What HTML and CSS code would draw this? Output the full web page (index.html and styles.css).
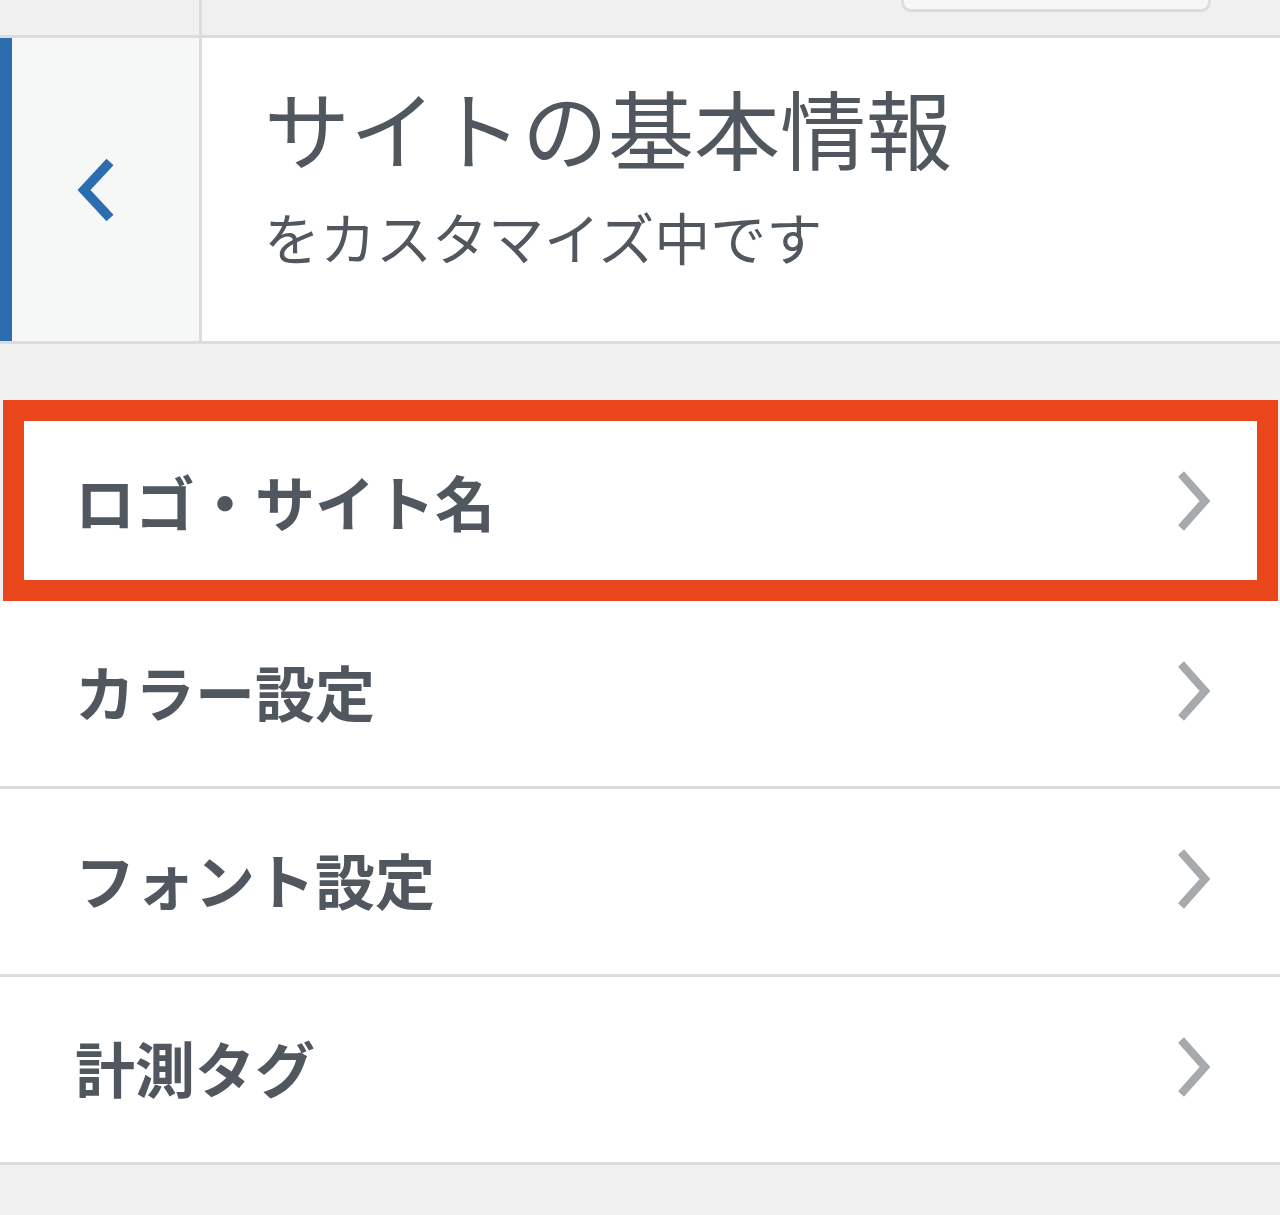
FILE: index.html
```html
<!DOCTYPE html>
<html lang="ja">
<head>
    <meta charset="UTF-8">
    <meta name="viewport" content="width=device-width, initial-scale=1.0">
    <title>サイトの基本情報</title>
    <link rel="stylesheet" href="styles.css">
</head>
<body>
    <div class="topbar">
        <div class="topbar-side"></div>
        <div class="topbar-main">
            <span class="topbar-button"></span>
        </div>
    </div>

    <div class="panel-header">
        <button class="back" aria-label="戻る">
            <svg width="36" height="62" viewBox="0 0 36 62">
                <polyline points="33,3 7,31 33,59" fill="none" stroke="#2c6db0" stroke-width="9.5"/>
            </svg>
        </button>
        <div class="panel-title">
            <h2>サイトの基本情報</h2>
            <p>をカスタマイズ中です</p>
        </div>
    </div>

    <ul class="sections">
        <li class="section is-marked">
            <span>ロゴ・サイト名</span>
            <svg class="arrow" width="34" height="60" viewBox="0 0 34 60">
                <polyline points="4,3 28,30 4,57" fill="none" stroke="#a7aaad" stroke-width="8"/>
            </svg>
        </li>
        <li class="section">
            <span>カラー設定</span>
            <svg class="arrow" width="34" height="60" viewBox="0 0 34 60">
                <polyline points="4,3 28,30 4,57" fill="none" stroke="#a7aaad" stroke-width="8"/>
            </svg>
        </li>
        <li class="section">
            <span>フォント設定</span>
            <svg class="arrow" width="34" height="60" viewBox="0 0 34 60">
                <polyline points="4,3 28,30 4,57" fill="none" stroke="#a7aaad" stroke-width="8"/>
            </svg>
        </li>
        <li class="section">
            <span>計測タグ</span>
            <svg class="arrow" width="34" height="60" viewBox="0 0 34 60">
                <polyline points="4,3 28,30 4,57" fill="none" stroke="#a7aaad" stroke-width="8"/>
            </svg>
        </li>
    </ul>
</body>
</html>
```

FILE: styles.css
```css
body {
    margin: 0;
    background: #f0f0f1;
    font-family: "Noto Sans CJK JP", sans-serif;
    color: #50575e;
}

.topbar {
    display: flex;
    height: 35px;
    border-bottom: 3px solid #dcdcde;
    overflow: hidden;
}

.topbar-side {
    width: 199px;
    border-right: 3px solid #dcdcde;
}

.topbar-main {
    flex: 1;
    display: flex;
    justify-content: flex-end;
    padding-right: 69px;
}

.topbar-button {
    width: 304px;
    height: 36px;
    margin-top: -30px;
    border: 3px solid #dcdcde;
    border-radius: 10px;
    background: #f6f7f7;
}

.panel-header {
    display: flex;
    height: 303px;
    background: #fff;
    border-bottom: 3px solid #dcdcde;
}

.back {
    box-sizing: border-box;
    width: 202px;
    margin: 0;
    padding: 0 0 0 65px;
    display: flex;
    align-items: center;
    background: #f6f7f7;
    border: none;
    border-left: 12px solid #2c6db0;
    border-right: 3px solid #dcdcde;
    cursor: pointer;
}

.back svg {
    overflow: visible;
}

.panel-title {
    padding: 46px 0 0 62px;
}

.panel-title h2 {
    margin: 0;
    font-size: 86px;
    font-weight: 400;
    line-height: 1;
}

.panel-title p {
    margin: 38px 0 0;
    font-size: 56px;
    line-height: 1;
}

.sections {
    list-style: none;
    margin: 56px 0 0;
    padding: 0;
}

.section {
    box-sizing: border-box;
    height: 188px;
    display: flex;
    align-items: center;
    justify-content: space-between;
    padding: 0 69px 6px 75px;
    background: #fff;
    border-bottom: 3px solid #dcdcde;
    font-size: 60px;
    font-weight: 700;
    line-height: 1;
}

.section .arrow {
    overflow: visible;
}

.section.is-marked {
    height: 201px;
    margin: 0 2px 0 3px;
    padding: 4px 67px 0 72px;
    outline: 21px solid #ea461b;
    outline-offset: -21px;
}
```
